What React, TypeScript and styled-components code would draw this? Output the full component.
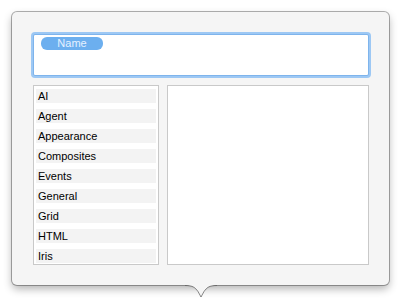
import React from "react";
import styled, { createGlobalStyle } from "styled-components";

const GlobalStyle = createGlobalStyle`
  html, body {
    margin: 0;
    padding: 0;
    background: #ffffff;
  }
  body {
    font-family: "Liberation Sans", Helvetica, Arial, sans-serif;
    -webkit-font-smoothing: antialiased;
  }
`;

// styled components
const Stage = styled.div`
  width: 402px;
  height: 298px;
  padding: 12px 0 0 12px;
  box-sizing: border-box;
`;

const Popover = styled.div`
  position: relative;
  width: 377px;
  height: 273px;
  box-sizing: border-box;
  padding: 22px 20px 20px 21px;
  background: #f5f5f5;
  border-radius: 5px;
  box-shadow: 0 0 0 1px rgba(0, 0, 0, 0.3), 0 4px 8px rgba(0, 0, 0, 0.3);
  display: flex;
  flex-direction: column;
  gap: 9px;
`;

const TokenField = styled.div`
  height: 42px;
  background: #ffffff;
  border: 1px solid #7eb4ec;
  border-radius: 2px;
  box-shadow: 0 0 0 2px #9dc8f4;
  box-sizing: border-box;
  padding: 2px 7px;
  display: flex;
  align-items: flex-start;
`;

const Token = styled.span`
  width: 62px;
  height: 13px;
  border-radius: 6px;
  background: #6cafef;
  color: #e4f1ff;
  font-size: 11px;
  line-height: 13px;
  text-align: center;
`;

const Panes = styled.div`
  flex: 1;
  display: flex;
  gap: 8px;
  min-height: 0;
`;

const Pane = styled.div<{ $width: number }>`
  width: ${(p) => p.$width}px;
  height: 180px;
  box-sizing: border-box;
  background: #ffffff;
  border: 1px solid #c9c9c9;
  overflow: hidden;
`;

const List = styled.ul`
  list-style: none;
  margin: 0;
  padding: 3px 2px 0 2px;
  display: flex;
  flex-direction: column;
  gap: 6px;
`;

const Row = styled.li`
  height: 14px;
  background: #f3f3f3;
  color: #000000;
  font-size: 11px;
  line-height: 14px;
  padding-left: 2px;
`;

const Arrow = styled.svg`
  position: absolute;
  left: 174px;
  top: calc(100% - 2px);
  width: 30px;
  height: 15px;
  overflow: visible;
`;

const categories = [
  "AI",
  "Agent",
  "Appearance",
  "Composites",
  "Events",
  "General",
  "Grid",
  "HTML",
  "Iris",
];

export default function App() {
  return (
    <>
      <GlobalStyle />
      <Stage>
        <Popover>
          <TokenField>
            <Token>Name</Token>
          </TokenField>
          <Panes>
            <Pane $width={126}>
              <List>
                {categories.map((c) => (
                  <Row key={c}>{c}</Row>
                ))}
              </List>
            </Pane>
            <Pane $width={203} />
          </Panes>
          <Arrow viewBox="0 -2 30 15">
            <path
              d="M-1 -2 L-1 0.5 C7 0.5 9 2.5 12 6.5 L15 12 L18 6.5 C21 2.5 23 0.5 31 0.5 L31 -2 Z"
              fill="#f5f5f5"
            />
            <path
              d="M-1 0.5 C7 0.5 9 2.5 12 6.5 L15 12 L18 6.5 C21 2.5 23 0.5 31 0.5"
              fill="none"
              stroke="rgba(0,0,0,0.45)"
              strokeWidth="1"
            />
          </Arrow>
        </Popover>
      </Stage>
    </>
  );
}
